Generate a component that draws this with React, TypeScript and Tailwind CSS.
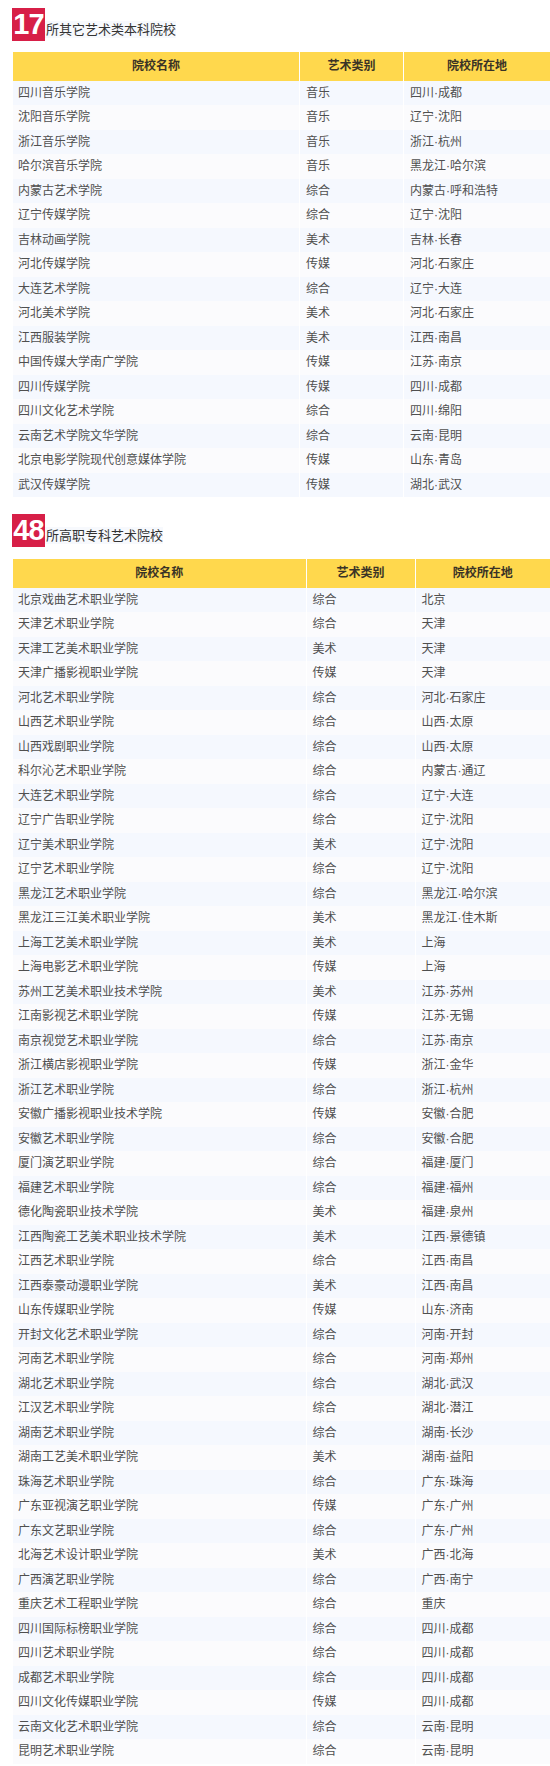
import React from 'react';

type Row = [string, string, string];

const undergrad: Row[] = [
  ['四川音乐学院', '音乐', '四川·成都'],
  ['沈阳音乐学院', '音乐', '辽宁·沈阳'],
  ['浙江音乐学院', '音乐', '浙江·杭州'],
  ['哈尔滨音乐学院', '音乐', '黑龙江·哈尔滨'],
  ['内蒙古艺术学院', '综合', '内蒙古·呼和浩特'],
  ['辽宁传媒学院', '综合', '辽宁·沈阳'],
  ['吉林动画学院', '美术', '吉林·长春'],
  ['河北传媒学院', '传媒', '河北·石家庄'],
  ['大连艺术学院', '综合', '辽宁·大连'],
  ['河北美术学院', '美术', '河北·石家庄'],
  ['江西服装学院', '美术', '江西·南昌'],
  ['中国传媒大学南广学院', '传媒', '江苏·南京'],
  ['四川传媒学院', '传媒', '四川·成都'],
  ['四川文化艺术学院', '综合', '四川·绵阳'],
  ['云南艺术学院文华学院', '综合', '云南·昆明'],
  ['北京电影学院现代创意媒体学院', '传媒', '山东·青岛'],
  ['武汉传媒学院', '传媒', '湖北·武汉'],
];

const vocational: Row[] = [
  ['北京戏曲艺术职业学院', '综合', '北京'],
  ['天津艺术职业学院', '综合', '天津'],
  ['天津工艺美术职业学院', '美术', '天津'],
  ['天津广播影视职业学院', '传媒', '天津'],
  ['河北艺术职业学院', '综合', '河北·石家庄'],
  ['山西艺术职业学院', '综合', '山西·太原'],
  ['山西戏剧职业学院', '综合', '山西·太原'],
  ['科尔沁艺术职业学院', '综合', '内蒙古·通辽'],
  ['大连艺术职业学院', '综合', '辽宁·大连'],
  ['辽宁广告职业学院', '综合', '辽宁·沈阳'],
  ['辽宁美术职业学院', '美术', '辽宁·沈阳'],
  ['辽宁艺术职业学院', '综合', '辽宁·沈阳'],
  ['黑龙江艺术职业学院', '综合', '黑龙江·哈尔滨'],
  ['黑龙江三江美术职业学院', '美术', '黑龙江·佳木斯'],
  ['上海工艺美术职业学院', '美术', '上海'],
  ['上海电影艺术职业学院', '传媒', '上海'],
  ['苏州工艺美术职业技术学院', '美术', '江苏·苏州'],
  ['江南影视艺术职业学院', '传媒', '江苏·无锡'],
  ['南京视觉艺术职业学院', '综合', '江苏·南京'],
  ['浙江横店影视职业学院', '传媒', '浙江·金华'],
  ['浙江艺术职业学院', '综合', '浙江·杭州'],
  ['安徽广播影视职业技术学院', '传媒', '安徽·合肥'],
  ['安徽艺术职业学院', '综合', '安徽·合肥'],
  ['厦门演艺职业学院', '综合', '福建·厦门'],
  ['福建艺术职业学院', '综合', '福建·福州'],
  ['德化陶瓷职业技术学院', '美术', '福建·泉州'],
  ['江西陶瓷工艺美术职业技术学院', '美术', '江西·景德镇'],
  ['江西艺术职业学院', '综合', '江西·南昌'],
  ['江西泰豪动漫职业学院', '美术', '江西·南昌'],
  ['山东传媒职业学院', '传媒', '山东·济南'],
  ['开封文化艺术职业学院', '综合', '河南·开封'],
  ['河南艺术职业学院', '综合', '河南·郑州'],
  ['湖北艺术职业学院', '综合', '湖北·武汉'],
  ['江汉艺术职业学院', '综合', '湖北·潜江'],
  ['湖南艺术职业学院', '综合', '湖南·长沙'],
  ['湖南工艺美术职业学院', '美术', '湖南·益阳'],
  ['珠海艺术职业学院', '综合', '广东·珠海'],
  ['广东亚视演艺职业学院', '传媒', '广东·广州'],
  ['广东文艺职业学院', '综合', '广东·广州'],
  ['北海艺术设计职业学院', '美术', '广西·北海'],
  ['广西演艺职业学院', '综合', '广西·南宁'],
  ['重庆艺术工程职业学院', '综合', '重庆'],
  ['四川国际标榜职业学院', '综合', '四川·成都'],
  ['四川艺术职业学院', '综合', '四川·成都'],
  ['成都艺术职业学院', '综合', '四川·成都'],
  ['四川文化传媒职业学院', '传媒', '四川·成都'],
  ['云南文化艺术职业学院', '综合', '云南·昆明'],
  ['昆明艺术职业学院', '综合', '云南·昆明'],
];

const SectionTitle = ({ count, title }: { count: string; title: string }) => (
  <div className="flex items-end">
    <div className="flex h-[33px] w-[33px] items-center justify-center bg-[#d71f47] text-[29px] font-bold leading-none tracking-[-1px] text-white">
      {count}
    </div>
    <div className="mb-[3px] bg-[#f7f9fd] pl-px text-[13px] leading-[17px] text-[#333]">{title}</div>
  </div>
);

const SchoolTable = ({ rows, cols }: { rows: Row[]; cols: string }) => (
  <div className="ml-px text-[12px] text-[#4f4f4f]">
    <div className={`grid ${cols} h-[28.5px] bg-[#ffd84d] font-bold text-[#3a3326]`}>
      <div className="flex items-center justify-center">院校名称</div>
      <div className="flex items-center justify-center border-l border-white">艺术类别</div>
      <div className="flex items-center justify-center border-l border-white">院校所在地</div>
    </div>
    {rows.map((r, i) => (
      <div
        key={r[0]}
        className={`grid ${cols} h-[24.5px] ${i % 2 === 0 ? 'bg-[#f5f8fe]' : 'bg-[#fbfbfd]'}`}
      >
        <div className="flex items-center px-[5px] whitespace-nowrap">{r[0]}</div>
        <div className="flex items-center border-l border-white px-[6px]">{r[1]}</div>
        <div className="flex items-center border-l border-white px-[6px] whitespace-nowrap">{r[2]}</div>
      </div>
    ))}
  </div>
);

export default function App() {
  return (
    <div className="w-[550px] overflow-hidden bg-white pl-[12px] pt-[8px] font-['Liberation_Sans','Noto_Sans_CJK_SC',sans-serif]">
      <SectionTitle count="17" title="所其它艺术类本科院校" />
      <div className="mt-[11px]">
        <SchoolTable rows={undergrad} cols="grid-cols-[286px_104px_1fr]" />
      </div>
      <div className="mt-[17px]">
        <SectionTitle count="48" title="所高职专科艺术院校" />
      </div>
      <div className="mt-[12px]">
        <SchoolTable rows={vocational} cols="grid-cols-[292.5px_109px_1fr]" />
      </div>
    </div>
  );
}
